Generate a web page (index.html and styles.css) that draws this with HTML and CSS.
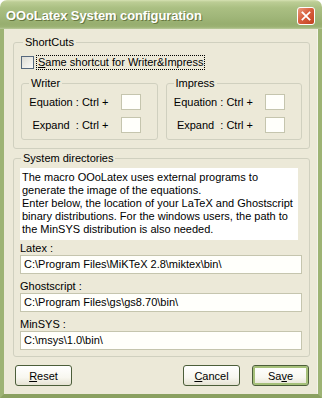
FILE: index.html
```html
<!DOCTYPE html>
<html lang="en">
<head>
  <meta charset="UTF-8" />
  <title>OOoLatex System configuration</title>
  <link rel="stylesheet" href="styles.css">
</head>
<body>
  <div class="window">
    <div class="titlebar">
      <span class="title">OOoLatex System configuration</span>
      <span class="close">
        <svg width="18" height="18" viewBox="0 0 18 18">
          <path d="M5 5 L13 13 M13 5 L5 13" stroke="#fff" stroke-width="2" stroke-linecap="square"/>
        </svg>
      </span>
    </div>

    <div class="client">
      <fieldset class="group shortcuts">
        <legend>ShortCuts</legend>
        <div class="check">
          <span class="box"></span>
          <span class="focus"><u>S</u>ame shortcut for Writer&amp;Impress</span>
        </div>
        <div class="apps">
          <fieldset class="group app">
            <legend>Writer</legend>
            <div class="key-row"><span class="key-label">Equation : Ctrl +</span><span class="key"></span></div>
            <div class="key-row"><span class="key-label">Expand &nbsp;: Ctrl +</span><span class="key"></span></div>
          </fieldset>
          <fieldset class="group app">
            <legend>Impress</legend>
            <div class="key-row"><span class="key-label">Equation : Ctrl +</span><span class="key"></span></div>
            <div class="key-row"><span class="key-label">Expand &nbsp;: Ctrl +</span><span class="key"></span></div>
          </fieldset>
        </div>
      </fieldset>

      <fieldset class="group dirs">
        <legend>System directories</legend>
        <p class="note">The macro OOoLatex uses external programs to generate the image of the equations.<br>Enter below, the location of your LaTeX and Ghostscript binary distributions. For the windows users, the path to the MinSYS distribution is also needed.</p>
        <div class="field-label">Latex :</div>
        <div class="field">C:\Program Files\MiKTeX 2.8\miktex\bin\</div>
        <div class="field-label">Ghostscript :</div>
        <div class="field">C:\Program Files\gs\gs8.70\bin\</div>
        <div class="field-label">MinSYS :</div>
        <div class="field">C:\msys\1.0\bin\</div>
      </fieldset>

      <div class="buttons">
        <span class="btn"><u>R</u>eset</span>
        <span class="spacer"></span>
        <span class="btn"><u>C</u>ancel</span>
        <span class="btn default">Sa<u>v</u>e</span>
      </div>
    </div>
  </div>
</body>
</html>
```

FILE: styles.css
```css
body {
  margin: 0;
  background: #fff;
  font-family: 'Liberation Sans', Arial, sans-serif;
  font-size: 11px;
  color: #000;
}
.window {
  width: 322px;
  height: 398px;
  display: flex;
  flex-direction: column;
  border-radius: 7px 7px 0 0;
  overflow: hidden;
}
.titlebar {
  height: 29px;
  flex: none;
  display: flex;
  align-items: center;
  justify-content: space-between;
  padding: 2px 7px 0 6px;
  box-sizing: border-box;
  background: linear-gradient(#d6e1b3 0, #bccd95 2px, #aabf82 8px, #a1b77a 16px, #97ae6f 24px, #9cb274 27px, #b9c99a 29px);
}
.title {
  color: #fff;
  font-weight: bold;
  font-size: 13px;
  letter-spacing: -0.1px;
  text-shadow: 1px 1px 0 #66773f;
}
.close {
  width: 18px;
  height: 18px;
  border: 1px solid #fff;
  border-radius: 3px;
  background: linear-gradient(135deg, #ea9a7d 0, #d9603f 45%, #c2411f 100%);
  box-sizing: border-box;
  display: flex;
  align-items: center;
  justify-content: center;
}
.close svg {
  width: 16px;
  height: 16px;
}
.client {
  flex: 1;
  display: flex;
  flex-direction: column;
  background: #ece9d8;
  border-left: 4px solid #9db374;
  border-right: 4px solid #9db374;
  border-bottom: 4px solid #8aa060;
  box-shadow: inset -1px 0 0 #f4f3ea;
}
.group {
  margin: 0;
  border: 1px solid #d0d0bf;
  border-radius: 3px;
  min-width: 0;
}
.group legend {
  padding: 0 2px;
  line-height: 13px;
  margin-left: 2px;
}
.shortcuts {
  margin: 7px 8px 0 9px;
  padding: 6px 7px 8px 7px;
}
.check {
  display: flex;
  align-items: center;
  height: 15px;
}
.box {
  width: 13px;
  height: 13px;
  box-sizing: border-box;
  border: 1px solid #55687d;
  background: linear-gradient(135deg, #dcdcd4, #fbfbf8);
  margin-right: 2px;
}
.focus {
  border: 1px dotted #000;
  padding: 0 1px;
  line-height: 13px;
}
.apps {
  display: grid;
  grid-template-columns: 1fr 1fr;
  gap: 8px;
  margin-top: 7px;
}
.app {
  padding: 4px 16px 6px 6px;
}
.app legend {
  margin-left: 1px;
}
.key-row {
  display: flex;
  align-items: center;
  height: 16px;
}
.key-row + .key-row {
  margin-top: 7px;
}
.key-label {
  flex: 1;
  text-align: right;
  white-space: nowrap;
}
.key {
  width: 20px;
  height: 16px;
  box-sizing: border-box;
  margin-left: 12px;
  border: 1px solid #c5c5ae;
  background: #fffffb;
}
.dirs {
  margin: 3px 8px 0 9px;
  padding: 3px 7px 6px 6px;
}
.dirs legend {
  margin-left: 1px;
}
.note {
  margin: 0 4px 0 0;
  padding: 3px 2px 4px 2px;
  background: #fff;
  line-height: 13px;
}
.field-label {
  line-height: 13px;
  margin-top: 6px;
}
.note + .field-label {
  margin-top: 2px;
}
.field {
  height: 19px;
  box-sizing: border-box;
  border: 1px solid #c5c5ae;
  background: #fffffb;
  padding: 0 3px;
  line-height: 17px;
  white-space: nowrap;
}
.buttons {
  display: flex;
  gap: 12px;
  margin-top: 8px;
  padding: 0 9px 0 11px;
}
.spacer {
  flex: 1;
}
.btn {
  width: 57px;
  height: 21px;
  box-sizing: border-box;
  border: 1px solid #4c5e3a;
  border-radius: 3px;
  background: linear-gradient(#ffffff 0, #f8f7f0 60%, #e6e3d3 100%);
  display: flex;
  align-items: center;
  justify-content: center;
}
.btn.default {
  box-shadow: inset 0 0 0 2px #a6c07a;
}
```
